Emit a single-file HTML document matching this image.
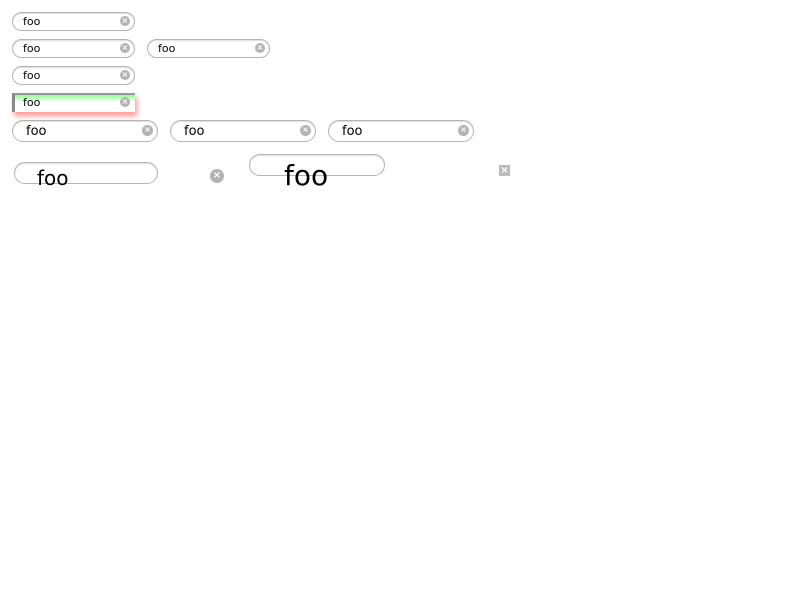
<!DOCTYPE html>
<html><head><style>
body{margin:0;background:#fff;font-family:"DejaVu Sans","Liberation Sans",sans-serif;}
.b{position:absolute;box-sizing:border-box;border:1px solid #b4b4b4;border-radius:10px;background:#fff;box-shadow:inset 0 1px 1px #ddd;}
.t{position:absolute;color:#000;white-space:nowrap;}
.c{position:absolute;border-radius:50%;background:#b3b3b3;color:#fff;font-size:8px;line-height:10px;text-align:center;font-weight:bold;}
</style></head><body>
<div class="b" style="left:12px;top:12px;width:123px;height:19px"></div>
<div class="t" style="left:23px;top:15px;font-size:11px">foo</div>
<div class="c" style="left:120px;top:16px;width:10px;height:10px">×</div>

<div class="b" style="left:12px;top:39px;width:123px;height:19px"></div>
<div class="t" style="left:23px;top:42px;font-size:11px">foo</div>
<div class="c" style="left:120px;top:43px;width:10px;height:10px">×</div>
<div class="b" style="left:147px;top:39px;width:123px;height:19px"></div>
<div class="t" style="left:158px;top:42px;font-size:11px">foo</div>
<div class="c" style="left:255px;top:43px;width:10px;height:10px">×</div>

<div class="b" style="left:12px;top:66px;width:123px;height:19px"></div>
<div class="t" style="left:23px;top:69px;font-size:11px">foo</div>
<div class="c" style="left:120px;top:70px;width:10px;height:10px">×</div>

<div style="position:absolute;left:12px;top:93px;width:123px;height:19px;box-sizing:border-box;border-top:2px solid #999;border-left:3px solid #888;background:linear-gradient(to bottom,#8f8 0,#fff 7px);box-shadow:2px 4px 5px rgba(255,80,80,.6)"></div>
<div class="t" style="left:23px;top:96px;font-size:11px">foo</div>
<div class="c" style="left:120px;top:97px;width:10px;height:10px">×</div>

<div class="b" style="left:12px;top:120px;width:146px;height:22px;border-radius:11px"></div>
<div class="t" style="left:26px;top:124px;font-size:13px">foo</div>
<div class="c" style="left:142px;top:125px;width:11px;height:11px">×</div>
<div class="b" style="left:170px;top:120px;width:146px;height:22px;border-radius:11px"></div>
<div class="t" style="left:184px;top:124px;font-size:13px">foo</div>
<div class="c" style="left:300px;top:125px;width:11px;height:11px">×</div>
<div class="b" style="left:328px;top:120px;width:146px;height:22px;border-radius:11px"></div>
<div class="t" style="left:342px;top:124px;font-size:13px">foo</div>
<div class="c" style="left:458px;top:125px;width:11px;height:11px">×</div>

<div class="b" style="left:14px;top:162px;width:144px;height:22px;border-radius:11px"></div>
<div class="t" style="left:37px;top:166px;font-size:20px">foo</div>
<div class="c" style="left:210px;top:169px;width:14px;height:14px;font-size:10px;line-height:14px">×</div>
<div class="b" style="left:249px;top:154px;width:136px;height:22px;border-radius:11px"></div>
<div class="t" style="left:284px;top:159px;font-size:28px">foo</div>
<div style="position:absolute;left:499px;top:165px;width:11px;height:11px;background:#bbb;color:#fff;font-size:10px;line-height:11px;text-align:center;font-weight:bold">×</div>
</body></html>
